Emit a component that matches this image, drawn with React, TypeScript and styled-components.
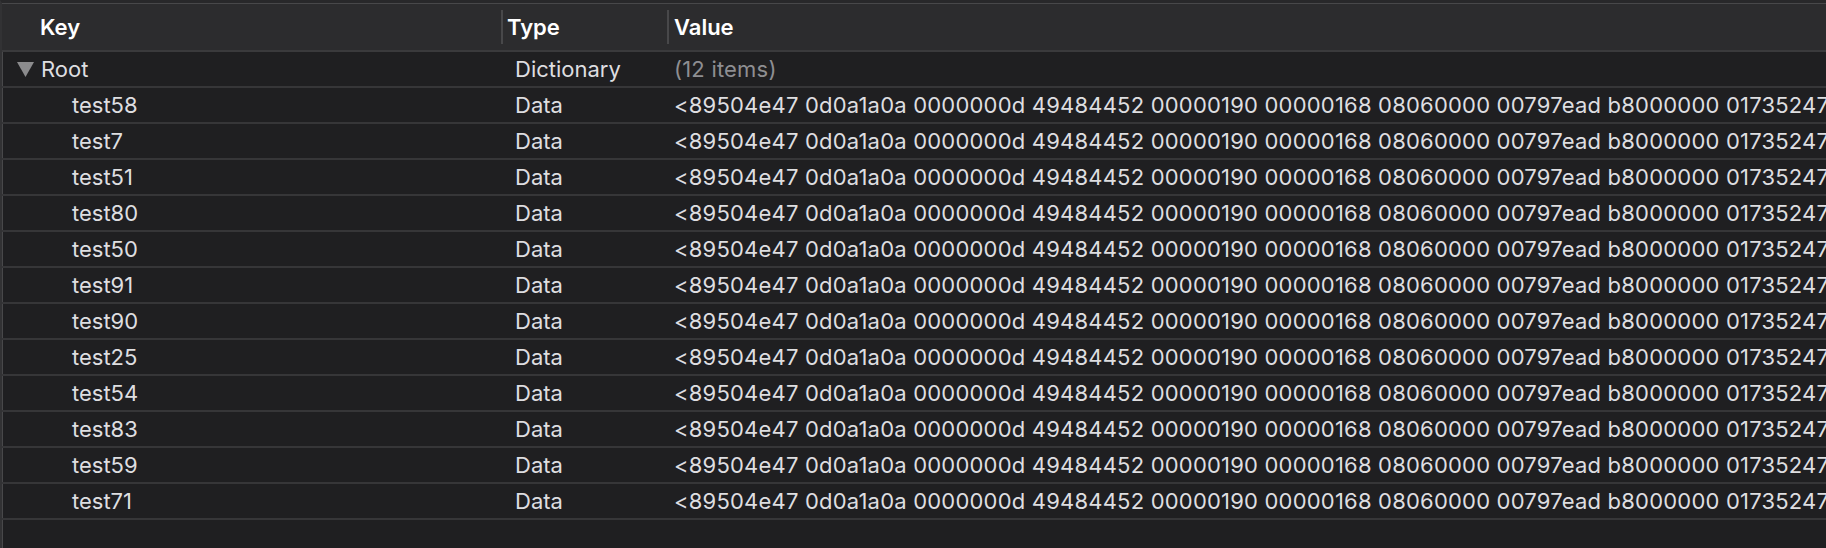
import styled, { createGlobalStyle } from "styled-components";

const HEX =
  "<89504e47 0d0a1a0a 0000000d 49484452 00000190 00000168 08060000 00797ead b8000000 01735247 4200aece 1ce90000 00096948 59730000 0b130000 0b130100 9a9c1800>";

const keys = ["test58", "test7", "test51", "test80", "test50", "test91", "test90", "test25", "test54", "test83", "test59", "test71"];

function App() {
  return (
    <>
      <GlobalStyle />
      <Frame>
        <HeaderBar>
          <HeadCell $pad={36}>Key</HeadCell>
          <HeadCell $pad={4} $divider>Type</HeadCell>
          <HeadCell $pad={5} $divider>Value</HeadCell>
        </HeaderBar>
        <Row>
          <KeyCell $indent={15}>
            <Disclosure width="17" height="15" viewBox="0 0 17 15">
              <polygon points="0,0 17,0 8.5,15" fill="#8b8b8d" />
            </Disclosure>
            Root
          </KeyCell>
          <Cell $pad={14}>Dictionary</Cell>
          <ValueCell $muted>(12 items)</ValueCell>
        </Row>
        {keys.map((k) => (
          <Row key={k}>
            <KeyCell $indent={70}>{k}</KeyCell>
            <Cell $pad={14}>Data</Cell>
            <ValueCell>{HEX}</ValueCell>
          </Row>
        ))}
      </Frame>
    </>
  );
}

export default App;

const GlobalStyle = createGlobalStyle`
  body {
    margin: 0;
    background: #1f1f21;
    overflow: hidden;
    font-family: Inter, "Liberation Sans", sans-serif;
  }
`;

const Frame = styled.div`
  width: 1826px;
  height: 548px;
  box-sizing: border-box;
  background: #1f1f21;
  border-left: 2px solid #323234;
  border-top: 3px solid #28282a;
  box-shadow: inset 1px 0 0 #48484a;
  overflow: hidden;
`;

const HeaderBar = styled.div`
  display: grid;
  grid-template-columns: 499px 166px 1fr;
  align-items: center;
  height: 46px;
  background: #2c2c2e;
  border-top: 1px solid #48484a;
  border-bottom: 2px solid #3a3a3c;
`;

const HeadCell = styled.div<{ $pad: number; $divider?: boolean }>`
  height: 34px;
  display: flex;
  align-items: center;
  padding-left: ${(p) => p.$pad}px;
  border-left: 2px solid ${(p) => (p.$divider ? "#48484a" : "transparent")};
  color: #ffffff;
  font-size: 22px;
  font-weight: 600;
`;

const Row = styled.div`
  display: grid;
  grid-template-columns: 499px 166px 1fr;
  height: 34px;
  border-bottom: 2px solid #363638;
  align-items: center;
  font-size: 22px;
  color: #dedee0;
`;

const KeyCell = styled.div<{ $indent: number }>`
  display: flex;
  align-items: center;
  gap: 7px;
  padding-left: ${(p) => p.$indent}px;
`;

const Disclosure = styled.svg`
  display: block;
  flex-shrink: 0;
`;

const Cell = styled.div<{ $pad: number }>`
  padding-left: ${(p) => p.$pad}px;
  white-space: nowrap;
  overflow: hidden;
`;

const ValueCell = styled.div<{ $muted?: boolean }>`
  padding-left: 7px;
  white-space: nowrap;
  overflow: hidden;
  letter-spacing: 0.2px;
  color: ${(p) => (p.$muted ? "#8e8e92" : "inherit")};
`;
